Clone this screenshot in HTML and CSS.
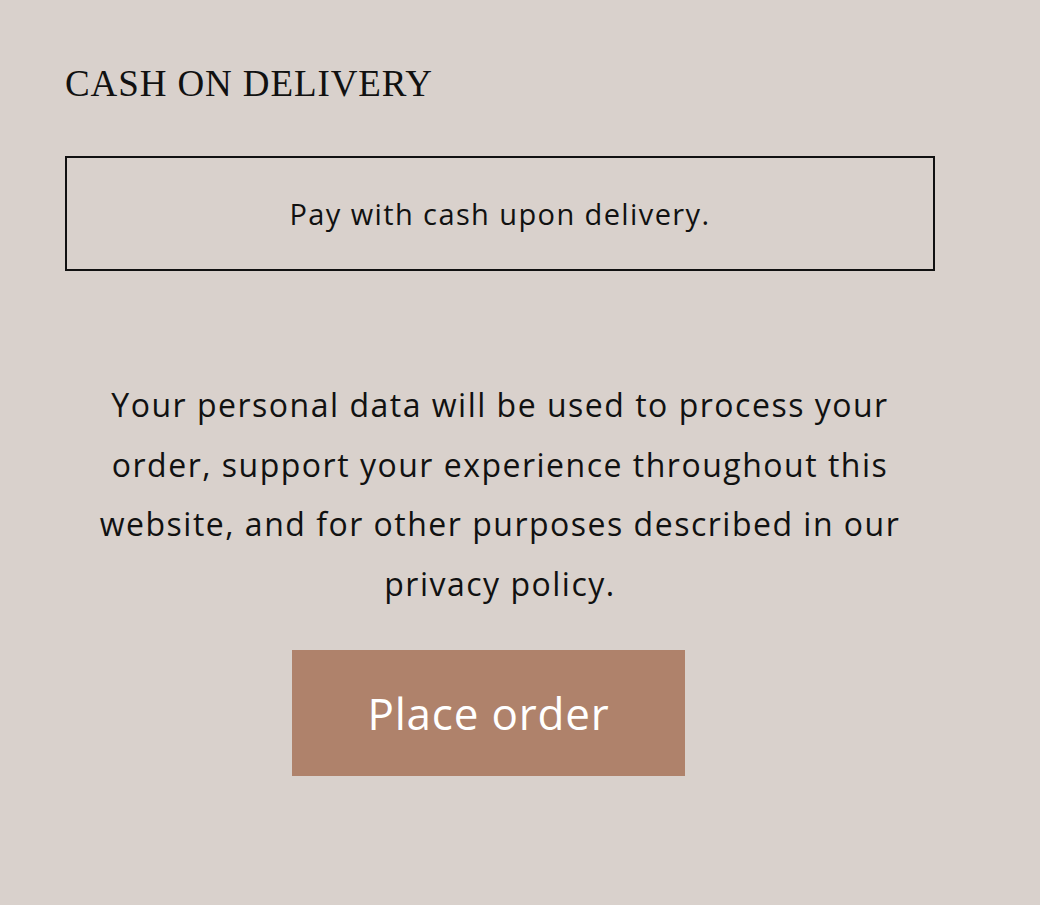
FILE: index.html
```html
<!DOCTYPE html>
<html lang="en">
  <head>
    <meta charset="UTF-8" />
    <meta name="viewport" content="width=device-width, initial-scale=1.0" />
    <title>Checkout</title>
    <link rel="stylesheet" href="styles.css">
  </head>
  <body>
    <div class="checkout">
      <h2 class="method-title">Cash on delivery</h2>

      <div class="method-box">
        <p>Pay with cash upon delivery.</p>
      </div>

      <p class="privacy-note">
        Your personal data will be used to process your order, support your
        experience throughout this website, and for other purposes described
        in our privacy policy.
      </p>

      <div class="actions">
        <button type="submit" class="place-order">Place order</button>
      </div>
    </div>
  </body>
</html>
```

FILE: styles.css
```css
body {
  font-family: "Open Sans", Lato, sans-serif;
  background-color: #d9d1cc;
  color: #111111;
  margin: 0;
}
.checkout {
  width: 870px;
  padding: 60px 0 0 65px;
}
.method-title {
  font-family: "Liberation Serif", serif;
  font-weight: normal;
  text-transform: uppercase;
  font-size: 37px;
  letter-spacing: 0.9px;
  line-height: 48px;
  margin: 0 0 48px;
}
.method-box {
  border: 2px solid #111111;
  height: 111px;
  display: flex;
  align-items: center;
  justify-content: center;
}
.method-box p {
  margin: 0;
  font-size: 29px;
  letter-spacing: 1.4px;
}
.privacy-note {
  width: 810px;
  margin: 104px auto 0;
  text-align: center;
  font-size: 32px;
  letter-spacing: 1.5px;
  line-height: 59.5px;
}
.actions {
  padding: 37px 0 0 227px;
}
.place-order {
  background-color: #af826b;
  color: #ffffff;
  font-family: inherit;
  font-size: 44px;
  letter-spacing: 0.8px;
  width: 393px;
  height: 126px;
  border: none;
  cursor: pointer;
}
```
